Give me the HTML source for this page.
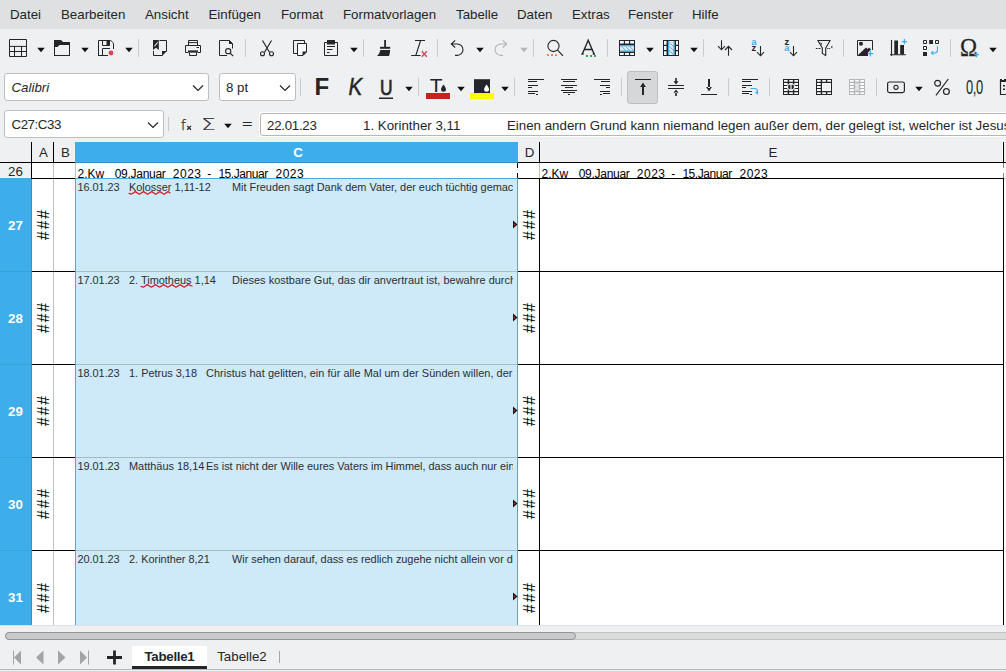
<!DOCTYPE html>
<html lang="de"><head><meta charset="utf-8"><title>Tabellenkalkulation</title>
<style>
html,body{margin:0;padding:0;}
body{width:1006px;height:671px;overflow:hidden;background:#eff0f1;position:relative;
 font-family:"Liberation Sans","DejaVu Sans",sans-serif;font-size:13.33px;color:#232629;}
.abs{position:absolute;}
.menubar{left:0;top:0;width:1006px;height:29px;background:#dee0e2;}
.menu{top:0;height:29px;line-height:29px;white-space:pre;font-size:13.3px;color:#232629;}
.ico{position:absolute;width:24px;height:24px;overflow:visible;}
.sep{position:absolute;width:1px;background:#c9cbcd;}
.dd{position:absolute;width:0;height:0;border-left:3.5px solid transparent;border-right:3.5px solid transparent;border-top:4px solid #232629;}
.dd.dis{border-top-color:#b4b6b8;}
.box{position:absolute;background:#fff;border:1px solid #bcbec0;border-radius:3px;box-sizing:border-box;}
.boxt{position:absolute;white-space:pre;color:#232629;}
.hdr{position:absolute;background:#eff0f1;color:#232629;text-align:center;font-size:13.3px;white-space:pre;}
.hsel{background:#3daee9;color:#fff;font-weight:bold;}
.cell{position:absolute;white-space:pre;overflow:hidden;color:#232629;}
.ct{position:absolute;white-space:pre;font-size:10.93px;color:#2b2f33;top:0;line-height:13px;}
.hash{position:absolute;white-space:pre;font-size:15.6px;letter-spacing:1.9px;text-indent:1.9px;color:#000;transform:rotate(-90deg);transform-origin:center center;line-height:16px;width:40px;height:16px;text-align:center;}
.ln{position:absolute;background:#000;}
.gl{position:absolute;background:#c0c0c0;}
</style></head>
<body>
<div class="abs menubar"></div>
<div class="abs menu" style="left:10px">Datei</div>
<div class="abs menu" style="left:61px">Bearbeiten</div>
<div class="abs menu" style="left:145px">Ansicht</div>
<div class="abs menu" style="left:208.5px">Einfügen</div>
<div class="abs menu" style="left:281px">Format</div>
<div class="abs menu" style="left:343px">Formatvorlagen</div>
<div class="abs menu" style="left:456px">Tabelle</div>
<div class="abs menu" style="left:517px">Daten</div>
<div class="abs menu" style="left:572px">Extras</div>
<div class="abs menu" style="left:628px">Fenster</div>
<div class="abs menu" style="left:692px">Hilfe</div>
<svg class="ico" style="left:6px;top:36px" viewBox="0 0 24 24"><path d="M3.5 3.5H20.5V20.5H3.5Z M3.5 10.4H20.5 M3.5 15.5H20.5 M8.5 10V20.5 M15.5 10V20.5" fill="none" stroke="#232629" stroke-width="1" /></svg>
<svg class="ico" style="left:50px;top:36px" viewBox="0 0 24 24"><path d="M4 4H11L13 6H20V20H4Z M5 11V19H19V9H9.5L7.5 11Z" fill="#232629" fill-rule="evenodd"/></svg>
<svg class="ico" style="left:94px;top:36px" viewBox="0 0 24 24"><path d="M4.5 20V4.5H16.8L19.5 7.2V13 M4 19.5H14 M8.5 4.5V9.5H15.5V4.5 M8.5 19.5V12.5H16" fill="none" stroke="#232629" stroke-width="1" /><path d="M12.5 5H15V9H12.5Z" fill="#232629" /><circle cx="17" cy="17" r="2.4" fill="#da4453"/></svg>
<svg class="ico" style="left:148px;top:36px" viewBox="0 0 24 24"><path d="M5 4H10.8V14L7.9 11.8L5 14Z" fill="#232629" /><path d="M6 10L9.8 5.6V7L7 10.6Z" fill="#eff0f1" /><path d="M11.5 4.5H18.5V15.5 M5.5 15V19.5H14.5" fill="none" stroke="#232629" stroke-width="1" /><path d="M14 15H19L14 20Z" fill="#232629" /></svg>
<svg class="ico" style="left:181px;top:36px" viewBox="0 0 24 24"><path d="M7.5 9V4.5H16.5V9 M7 16.5H4.5V9.5H19.5V16.5H17 M8.5 16.5V19.5H15.5V16.5 M8 6.6H16" fill="none" stroke="#232629" stroke-width="1" /><path d="M7 14.4H17V16.6H7Z" fill="#232629" /><path d="M15.5 11H18V12H15.5Z" fill="#232629" /></svg>
<svg class="ico" style="left:214px;top:36px" viewBox="0 0 24 24"><path d="M13 19.5H5.5V4.5H15.5L18.5 7.5V12.5" fill="none" stroke="#232629" stroke-width="1" /><path d="M15 4V8H19Z" fill="#232629" /><circle cx="14.2" cy="15.2" r="2.6" fill="none" stroke="#232629" stroke-width="1.1"/><path d="M16 17L19.2 20.2" fill="none" stroke="#232629" stroke-width="1.2" /></svg>
<svg class="ico" style="left:255px;top:36px" viewBox="0 0 24 24"><path d="M7.5 4.5L14.5 16.2 M16.5 4.5L9.5 16.2" fill="none" stroke="#232629" stroke-width="1.2" /><circle cx="7.5" cy="17.7" r="2" fill="none" stroke="#232629" stroke-width="1.1"/><circle cx="16.5" cy="17.7" r="2" fill="none" stroke="#232629" stroke-width="1.1"/></svg>
<svg class="ico" style="left:288px;top:36px" viewBox="0 0 24 24"><path d="M9 17.5H5.5V4.5H16.5V7" fill="none" stroke="#232629" stroke-width="1" /><path d="M9.5 7.5H18.5V16L15 19.5H9.5Z" fill="#fcfcfc" stroke="#232629" stroke-width="1"/><path d="M14.5 15.5H19L14.5 20Z" fill="#232629" /></svg>
<svg class="ico" style="left:319px;top:36px" viewBox="0 0 24 24"><path d="M5.5 6.5H18.5V19.5H5.5Z" fill="none" stroke="#232629" stroke-width="1" /><path d="M8 4H16V8.5H8Z" fill="#232629" /><path d="M8 10.5H16 M8 13.5H13.5 M8 16.5H10.5" fill="none" stroke="#232629" stroke-width="1" /></svg>
<svg class="ico" style="left:372px;top:36px" viewBox="0 0 24 24"><path d="M12.2 4H14V11H12.2Z" fill="#232629" /><path d="M8 10.8H18.2V12.8H8Z" fill="#232629" /><path d="M8.3 14H18.2C18 16.5 17.6 18.5 17 20H5C6.8 18.5 7.8 16.5 8.3 14Z" fill="#232629" /></svg>
<svg class="ico" style="left:407px;top:36px" viewBox="0 0 24 24"><path d="M8 4.5H18 M4.2 19.5H13.5 M13.6 4.5L8.8 19.5" fill="none" stroke="#232629" stroke-width="1.1" /><path d="M14.8 15.3L19.8 20.7 M19.8 15.3L14.8 20.7" fill="none" stroke="#da4453" stroke-width="1.35" /></svg>
<svg class="ico" style="left:445px;top:36px" viewBox="0 0 24 24"><path d="M10.2 4.3L6.3 8L10.2 11.5 M6.5 8H12.3A5.7 5.7 0 0 1 12.3 19.4H10" fill="none" stroke="#232629" stroke-width="1.1" /></svg>
<svg class="ico" style="left:489px;top:36px" viewBox="0 0 24 24"><path d="M13.8 4.3L17.7 8L13.8 11.5 M17.5 8H11.7A5.7 5.7 0 0 0 11.7 19.4H14" fill="none" stroke="#b3b5b6" stroke-width="1.1" /></svg>
<svg class="ico" style="left:542px;top:36px" viewBox="0 0 24 24"><circle cx="11.5" cy="10" r="5.6" fill="none" stroke="#232629" stroke-width="1.1"/><path d="M15.6 14.2L21 19.8" fill="none" stroke="#232629" stroke-width="1.2" /><path d="M5 18.2H7V20H5Z M9 18.2H11V20H9Z M13 18.2H15V20H13Z" fill="#f47750" /></svg>
<svg class="ico" style="left:576px;top:36px" viewBox="0 0 24 24"><path d="M6.3 18L12.2 4.2L18.1 18 M8.3 13.5H16.1 M5.4 18H7.6 M16.8 18H19" fill="none" stroke="#232629" stroke-width="1.4" /><path d="M10 19H12V21H10Z M14 19H16V21H14Z M18 19H20V21H18Z" fill="#27ae60" /></svg>
<svg class="ico" style="left:615px;top:36px" viewBox="0 0 24 24"><path d="M4 4H20V20H4Z" fill="#232629" /><path d="M5 5H8.8V7.5H5Z M10 5H14V7.5H10Z M15.2 5H19V7.5H15.2Z M5 17H8.8V19H5Z M10 17H14V19H10Z M15.2 17H19V19H15.2Z" fill="#fcfcfc" /><path d="M5 9H19V15.5H5Z" fill="#e6e8ea" /><path d="M5 9.6H19 M5 15H19" fill="none" stroke="#3daee9" stroke-width="1.1" /><path d="M6 9.6L11 15 M10 9.6L15 15 M14 9.6L19 15" fill="none" stroke="#3daee9" stroke-width="0.9" /></svg>
<svg class="ico" style="left:659px;top:36px" viewBox="0 0 24 24"><g transform="rotate(90 12 12) scale(1,-1) translate(0,-24)"><path d="M4 4H20V20H4Z" fill="#232629" /><path d="M5 5H8.8V7.5H5Z M10 5H14V7.5H10Z M15.2 5H19V7.5H15.2Z M5 17H8.8V19H5Z M10 17H14V19H10Z M15.2 17H19V19H15.2Z" fill="#fcfcfc" /><path d="M5 9H19V15.5H5Z" fill="#e6e8ea" /><path d="M5 9.6H19 M5 15H19" fill="none" stroke="#3daee9" stroke-width="1.1" /><path d="M6 9.6L11 15 M10 9.6L15 15 M14 9.6L19 15" fill="none" stroke="#3daee9" stroke-width="0.9" /></g></svg>
<svg class="ico" style="left:713px;top:36px" viewBox="0 0 24 24"><path d="M8.5 4.2V13.6 M5 10.2L8.5 13.8L12 10.2 M15.5 19.8V10.6 M12 14L15.5 10.4L19 14" fill="none" stroke="#232629" stroke-width="1.1" /></svg>
<svg class="ico" style="left:745px;top:36px" viewBox="0 0 24 24"><text x="6.2" y="8.8" font-family="Liberation Sans, sans-serif" font-size="9.4" fill="#3daee9" font-weight="bold">a</text><text x="6.4" y="14.9" font-family="Liberation Sans, sans-serif" font-size="9.4" fill="#232629" font-weight="bold">z</text><path d="M15.5 10V19.6 M12 16.2L15.5 19.8L19 16.2" fill="none" stroke="#232629" stroke-width="1.1" /></svg>
<svg class="ico" style="left:778px;top:36px" viewBox="0 0 24 24"><text x="6.4" y="8.8" font-family="Liberation Sans, sans-serif" font-size="9.4" fill="#232629" font-weight="bold">z</text><text x="6.2" y="14.9" font-family="Liberation Sans, sans-serif" font-size="9.4" fill="#3daee9" font-weight="bold">a</text><path d="M15.5 10V19.6 M12 16.2L15.5 19.8L19 16.2" fill="none" stroke="#232629" stroke-width="1.1" /></svg>
<svg class="ico" style="left:812px;top:36px" viewBox="0 0 24 24"><path d="M5.8 4.5H18.2L13.7 12V19.6L10.3 17.4V12Z" fill="none" stroke="#232629" stroke-width="1.1" stroke-linejoin="round"/><path d="M3.8 12.5H5.6 M6.5 12.5H8.5 M15.2 12.5H16.5 M17.2 12.5H18.2" fill="none" stroke="#232629" stroke-width="1" /><path d="M20.3 9.4V12.6L18.9 11Z" fill="#232629" /><path d="M7.8 7L9.6 7.4L9.2 9" fill="none" stroke="#232629" stroke-width="0.8" /></svg>
<svg class="ico" style="left:853px;top:36px" viewBox="0 0 24 24"><path d="M15 19.5H4.5V4.5H19.5V14" fill="none" stroke="#232629" stroke-width="1" /><circle cx="8" cy="7.8" r="2" fill="#232629"/><path d="M5 19L13 11.5L14.5 13L16 11.5L18 13.5L15 16.5V19Z" fill="#232629" /><path d="M14.6 17.6H20.2 M17.4 14.8V20.4" fill="none" stroke="#3daee9" stroke-width="1.3" /></svg>
<svg class="ico" style="left:886px;top:36px" viewBox="0 0 24 24"><path d="M5.5 4V19.5 M4 18.8H19.8" fill="none" stroke="#232629" stroke-width="1.1" /><path d="M8.3 4.5H12V18.5H8.3Z M14.2 9H18V18.5H14.2Z" fill="#232629" /><path d="M4.7 18.8L5.5 20.3L6.3 18.8Z" fill="#232629" /><path d="M15.8 5.6H21 M18.4 3V8.2" fill="none" stroke="#3daee9" stroke-width="1.2" /></svg>
<svg class="ico" style="left:919px;top:36px" viewBox="0 0 24 24"><path d="M4.5 4.5H7.5V7.5H4.5Z M16.5 4.5H19.5V7.5H16.5Z M4.5 10.5H7.5V13.5H4.5Z" fill="none" stroke="#232629" stroke-width="1" /><path d="M10.2 4H14V8H10.2Z M4 16H8V20H4Z" fill="#232629" /><path d="M18.5 10.3V14A3 3 0 0 1 15.5 17H12.6 M14.3 15.2L12.5 17L14.3 18.8" fill="none" stroke="#3daee9" stroke-width="1.1" /></svg>
<svg class="ico" style="left:957px;top:36px" viewBox="0 0 24 24"><text x="3.3" y="19.85" font-family="Liberation Serif, serif" font-size="25.6" fill="#232629" stroke="#232629" stroke-width="0.3" transform="scale(0.9,1)">Ω</text><path d="M16.9 18.7H22.1 M19.5 16.1V21.3" fill="none" stroke="#3daee9" stroke-width="1.3" /></svg>
<svg class="abs" style="left:35.5px;top:47px;width:10px;height:6px" viewBox="0 0 10 6"><path d="M1.2 0.8H8.8L5 5.2Z" fill="#111"/></svg>
<svg class="abs" style="left:79.5px;top:47px;width:10px;height:6px" viewBox="0 0 10 6"><path d="M1.2 0.8H8.8L5 5.2Z" fill="#111"/></svg>
<svg class="abs" style="left:123.5px;top:47px;width:10px;height:6px" viewBox="0 0 10 6"><path d="M1.2 0.8H8.8L5 5.2Z" fill="#111"/></svg>
<svg class="abs" style="left:348.5px;top:47px;width:10px;height:6px" viewBox="0 0 10 6"><path d="M1.2 0.8H8.8L5 5.2Z" fill="#111"/></svg>
<svg class="abs" style="left:474.5px;top:47px;width:10px;height:6px" viewBox="0 0 10 6"><path d="M1.2 0.8H8.8L5 5.2Z" fill="#111"/></svg>
<svg class="abs" style="left:644.5px;top:47px;width:10px;height:6px" viewBox="0 0 10 6"><path d="M1.2 0.8H8.8L5 5.2Z" fill="#111"/></svg>
<svg class="abs" style="left:688.5px;top:47px;width:10px;height:6px" viewBox="0 0 10 6"><path d="M1.2 0.8H8.8L5 5.2Z" fill="#111"/></svg>
<svg class="abs" style="left:987.5px;top:47px;width:10px;height:6px" viewBox="0 0 10 6"><path d="M1.2 0.8H8.8L5 5.2Z" fill="#111"/></svg>
<svg class="abs" style="left:518.5px;top:47px;width:10px;height:6px" viewBox="0 0 10 6"><path d="M1.2 0.8H8.8L5 5.2Z" fill="#b4b6b8"/></svg>
<div class="sep" style="left:138px;top:39px;height:18px"></div>
<div class="sep" style="left:245px;top:39px;height:18px"></div>
<div class="sep" style="left:363px;top:39px;height:18px"></div>
<div class="sep" style="left:437px;top:39px;height:18px"></div>
<div class="sep" style="left:533px;top:39px;height:18px"></div>
<div class="sep" style="left:607px;top:39px;height:18px"></div>
<div class="sep" style="left:703px;top:39px;height:18px"></div>
<div class="sep" style="left:843px;top:39px;height:18px"></div>
<div class="sep" style="left:950px;top:39px;height:18px"></div>
<div class="box" style="left:4px;top:73px;width:205px;height:28px"></div>
<div class="boxt" style="left:11.5px;top:73px;line-height:29px;font-style:italic;font-size:13.3px">Calibri</div>
<div class="box" style="left:219px;top:73px;width:77px;height:28px"></div>
<div class="boxt" style="left:226px;top:73px;line-height:29px;font-size:13.3px">8 pt</div>
<svg class="ico" style="left:186px;top:75.7px" viewBox="0 0 24 24"><path d="M7 9.5L12 14.5L17 9.5" fill="none" stroke="#232629" stroke-width="1.2" /></svg>
<svg class="ico" style="left:273px;top:75.7px" viewBox="0 0 24 24"><path d="M7 9.5L12 14.5L17 9.5" fill="none" stroke="#232629" stroke-width="1.2" /></svg>
<div class="abs" style="left:627px;top:71px;width:31px;height:33px;background:#d6d7d8;border:1px solid #bcbec0;border-radius:3px;box-sizing:border-box"></div>
<svg class="ico" style="left:309px;top:75px" viewBox="0 0 24 24"><text x="5.5" y="20.1" font-family="Liberation Sans, sans-serif" font-size="24" fill="#232629" font-weight="bold">F</text></svg>
<svg class="ico" style="left:342px;top:75px" viewBox="0 0 24 24"><text x="7.7" y="20.1" font-family="Liberation Sans, sans-serif" font-size="24" font-style="italic" fill="#232629" stroke="#232629" stroke-width="0.45" transform="scale(0.86,1)">K</text></svg>
<svg class="ico" style="left:374px;top:75px" viewBox="0 0 24 24"><text x="7.6" y="19.9" font-family="Liberation Sans, sans-serif" font-size="22.3" fill="#232629" stroke="#232629" stroke-width="0.7" transform="scale(0.78,1)">U</text><path d="M5 22.5H19V24H5Z" fill="#232629" /></svg>
<svg class="ico" style="left:426px;top:75px" viewBox="0 0 24 24"><text x="3.2" y="17" font-family="Liberation Sans, sans-serif" font-size="17.9" fill="#232629" transform="scale(1.17,1)">T</text><path d="M17.5 9.4C18.6 11.2 20 12.6 20 14.2A2.5 2.5 0 0 1 15 14.2C15 12.6 16.4 11.2 17.5 9.4Z" fill="#232629" /><path d="M0 18H24V24H0Z" fill="#c9211e" /></svg>
<svg class="ico" style="left:470px;top:75px" viewBox="0 0 24 24"><path d="M4 4.2H20V18H4Z" fill="#232629" /><path d="M16.6 9.4C17.7 11.2 19.1 12.6 19.1 14.2A2.5 2.5 0 0 1 14.1 14.2C14.1 12.6 15.5 11.2 16.6 9.4Z" fill="#fcfcfc" /><path d="M0 18H24V24H0Z" fill="#ffff00" /></svg>
<svg class="ico" style="left:524px;top:75px" viewBox="0 0 24 24"><path d="M4 4H20V5H4Z M4 6H13V7H4Z M4 10H14V11H4Z M4 12H8V13H4Z M4 16H14V17H4Z M4 18H11V19H4Z M12 19H14V20H12Z" fill="#232629" /></svg>
<svg class="ico" style="left:557px;top:75px" viewBox="0 0 24 24"><path d="M4 4H20V5H4Z M6 6H18V7H6Z M4 10H20V11H4Z M8 12H16V13H8Z M4 15H20V16H4Z M6 17H18V18H6Z M11 19H13V20H11Z" fill="#232629" /></svg>
<svg class="ico" style="left:590px;top:75px" viewBox="0 0 24 24"><path d="M4 4H20V5H4Z M11 6H20V7H11Z M10 10H20V11H10Z M16 12H20V13H16Z M10 16H20V17H10Z M13 18H20V19H13Z M10 19H12V20H10Z" fill="#232629" /></svg>
<svg class="ico" style="left:631px;top:75px" viewBox="0 0 24 24"><path d="M4 4H20V5H4Z M11 11.5H13V20H11Z M12 7.4L14.9 12H9.1Z" fill="#232629" /></svg>
<svg class="ico" style="left:664px;top:75px" viewBox="0 0 24 24"><path d="M4 10H20V11H4Z M4 13H20V14H4Z M11.2 3H12.8V7H11.2Z M12 9.5L9.5 6.2H14.5Z M11.2 17H12.8V21H11.2Z M12 14.5L9.5 17.8H14.5Z" fill="#232629" /></svg>
<svg class="ico" style="left:697px;top:75px" viewBox="0 0 24 24"><path d="M4 19H20V20H4Z M11 4H13V13H11Z M12 16.6L14.9 12H9.1Z" fill="#232629" /></svg>
<svg class="ico" style="left:738px;top:75px" viewBox="0 0 24 24"><path d="M4 4H20V5H4Z M4 6H13V7H4Z M4 10H14V11H4Z M4 12H8V13H4Z M4 16H14V17H4Z M4 18H11V19H4Z M12 19H14V20H12Z" fill="#232629" /><path d="M12.3 13.5H16.5A3 3 0 0 1 19.5 16.5V18.5" fill="none" stroke="#3daee9" stroke-width="1.2" /><path d="M16.8 17L19.8 20L19.8 16.4Z" fill="#3daee9" /></svg>
<svg class="ico" style="left:779px;top:75px" viewBox="0 0 24 24"><path d="M4 4H20V20H4Z" fill="#232629" /><path d="M5 5H8.7V6.8H5Z M10.2 5H13.9V6.8H10.2Z M15.3 5H19V6.8H15.3Z M5 17.2H8.7V19H5Z M10.2 17.2H13.9V19H10.2Z M15.3 17.2H19V19H15.3Z" fill="#fcfcfc" /><path d="M5 8.1H8.7V9.9H5Z M5 11.1H8.7V12.9H5Z M5 14.1H8.7V15.9H5Z M15.3 8.1H19V9.9H15.3Z M15.3 11.1H19V12.9H15.3Z M15.3 14.1H19V15.9H15.3Z M10.2 8.1H13.9V9.2H10.2Z M10.2 14.8H13.9V15.9H10.2Z" fill="#fcfcfc" /><ellipse cx="12" cy="12" rx="4" ry="3.2" fill="#fcfcfc"/><path d="M11.4 9.6V14.4A2.4 2.4 0 0 1 11.4 9.6Z M12.6 9.6V14.4A2.4 2.4 0 0 0 12.6 9.6Z" fill="#232629" /></svg>
<svg class="ico" style="left:812px;top:75px" viewBox="0 0 24 24"><path d="M4 4H20V20H4Z" fill="#232629" /><path d="M5 5H8.7V6.8H5Z M10.2 5H13.9V6.8H10.2Z M15.3 5H19V6.8H15.3Z M5 17.2H8.7V19H5Z M10.2 17.2H13.9V19H10.2Z M15.3 17.2H19V19H15.3Z" fill="#fcfcfc" /><path d="M5 8.1H8.7V9.9H5Z M5 11.1H8.7V12.9H5Z M5 14.1H8.7V15.9H5Z" fill="#fcfcfc" /><path d="M10 8H19V16H10Z" fill="#fcfcfc" /><path d="M11 9H18V15H11Z" fill="#eff0f1" /></svg>
<svg class="ico" style="left:845px;top:75px" viewBox="0 0 24 24"><path d="M4 4H20V20H4Z" fill="#b5b6b7" /><path d="M5 5H8.7V6.8H5Z M10.2 5H13.9V6.8H10.2Z M15.3 5H19V6.8H15.3Z M5 17.2H8.7V19H5Z M10.2 17.2H13.9V19H10.2Z M15.3 17.2H19V19H15.3Z" fill="#fcfcfc" /><path d="M5 8.1H8.7V9.9H5Z M5 11.1H8.7V12.9H5Z M5 14.1H8.7V15.9H5Z M15.3 8.1H19V9.9H15.3Z M15.3 11.1H19V12.9H15.3Z M15.3 14.1H19V15.9H15.3Z" fill="#fcfcfc" /><path d="M9.2 8.2H14.8L13.4 12L14.8 15.8H9.2L10.6 12Z" fill="#e2e3e4" /></svg>
<svg class="ico" style="left:885px;top:75px" viewBox="0 0 24 24"><rect x="2.6" y="7" width="16.8" height="10.6" rx="1.8" fill="none" stroke="#232629" stroke-width="1.2"/><circle cx="11" cy="12.3" r="2.1" fill="none" stroke="#232629" stroke-width="1.1"/></svg>
<svg class="ico" style="left:930px;top:75px" viewBox="0 0 24 24"><circle cx="7.6" cy="8.2" r="2.9" fill="none" stroke="#232629" stroke-width="1.2"/><circle cx="16.4" cy="16.6" r="2.9" fill="none" stroke="#232629" stroke-width="1.2"/><path d="M18.3 4L6 20.3" fill="none" stroke="#232629" stroke-width="1.2" /></svg>
<svg class="ico" style="left:963px;top:75px" viewBox="0 0 24 24"><text x="4.4" y="19.3" font-family="Liberation Sans, sans-serif" font-size="19.5" fill="#232629" transform="scale(0.66,1)" letter-spacing="-0.5">0,0</text></svg>
<svg class="ico" style="left:996px;top:75px" viewBox="0 0 24 24"><path d="M4.5 5V19.5H20" fill="none" stroke="#232629" stroke-width="1.2" /><path d="M4 4H20V7H4Z" fill="#232629" /><path d="M7 10H9V11.5H7Z M7 13.5H9V15H7Z" fill="#232629" /><path d="M6 3H8V5H6Z" fill="#eff0f1" /></svg>
<svg class="abs" style="left:403.5px;top:86px;width:10px;height:6px" viewBox="0 0 10 6"><path d="M1.2 0.8H8.8L5 5.2Z" fill="#111"/></svg>
<svg class="abs" style="left:455.5px;top:86px;width:10px;height:6px" viewBox="0 0 10 6"><path d="M1.2 0.8H8.8L5 5.2Z" fill="#111"/></svg>
<svg class="abs" style="left:499.5px;top:86px;width:10px;height:6px" viewBox="0 0 10 6"><path d="M1.2 0.8H8.8L5 5.2Z" fill="#111"/></svg>
<svg class="abs" style="left:913.5px;top:86px;width:10px;height:6px" viewBox="0 0 10 6"><path d="M1.2 0.8H8.8L5 5.2Z" fill="#111"/></svg>
<div class="sep" style="left:300px;top:78px;height:18px"></div>
<div class="sep" style="left:418px;top:78px;height:18px"></div>
<div class="sep" style="left:514px;top:78px;height:18px"></div>
<div class="sep" style="left:621px;top:78px;height:18px"></div>
<div class="sep" style="left:728px;top:78px;height:18px"></div>
<div class="sep" style="left:769px;top:78px;height:18px"></div>
<div class="sep" style="left:876px;top:78px;height:18px"></div>
<div class="box" style="left:4px;top:110px;width:160px;height:28px"></div>
<div class="boxt" style="left:11.5px;top:110px;line-height:29px;font-size:13.3px;letter-spacing:-0.45px">C27:C33</div>
<svg class="ico" style="left:141px;top:112.5px" viewBox="0 0 24 24"><path d="M7 9.5L12 14.5L17 9.5" fill="none" stroke="#232629" stroke-width="1.2" /></svg>
<div class="sep" style="left:168px;top:117px;height:14px"></div>
<svg class="ico" style="left:173px;top:113px" viewBox="0 0 24 24"><text x="7.8" y="16.5" font-family="DejaVu Sans Light, Liberation Sans, sans-serif" font-size="14.8" fill="#232629" stroke="#232629" stroke-width="0.25">f</text><path d="M14.2 12.9L18 16.7 M18 12.9L14.2 16.7" fill="none" stroke="#232629" stroke-width="1.3" /></svg>
<svg class="ico" style="left:198px;top:113px" viewBox="0 0 24 24"><text x="2.3" y="17" font-family="DejaVu Sans Light, Liberation Sans, sans-serif" font-size="16.5" fill="#232629" stroke="#232629" stroke-width="0.2" transform="scale(1.38,1)">Σ</text></svg>
<svg class="abs" style="left:222.5px;top:123px;width:10px;height:6px" viewBox="0 0 10 6"><path d="M1.2 0.8H8.8L5 5.2Z" fill="#111"/></svg>
<svg class="ico" style="left:234px;top:113px" viewBox="0 0 24 24"><text x="5.35" y="15" font-family="Liberation Sans, sans-serif" font-size="11" fill="#232629" stroke="#232629" stroke-width="0.3" transform="scale(1.55,1)">=</text></svg>
<div class="abs" style="left:259px;top:112px;width:760px;height:25px;background:#fff"></div>
<div class="box" style="left:260px;top:113px;width:760px;height:23px;border-radius:3px;border-color:#b4b6b8"></div>
<div class="boxt" style="left:267px;top:113px;line-height:26px;font-size:13.3px;letter-spacing:-0.27px">22.01.23</div>
<div class="boxt" style="left:363px;top:113px;line-height:26px;font-size:13.3px;letter-spacing:0px">1. Korinther 3,11</div>
<div class="boxt" style="left:507px;top:113px;line-height:26px;font-size:13.3px;letter-spacing:0px">Einen andern Grund kann niemand legen außer dem, der gelegt ist, welcher ist Jesus Christus.</div>
<div class="abs" style="left:0;top:142px;width:1006px;height:484px;background:#fff"></div>
<div class="hdr" style="left:0px;top:142px;width:31px;height:20px;line-height:21px"><span style="position:relative;left:0px"></span></div>
<div class="hdr" style="left:32px;top:142px;width:21px;height:20px;line-height:21px"><span style="position:relative;left:1px">A</span></div>
<div class="hdr" style="left:54px;top:142px;width:21px;height:20px;line-height:21px"><span style="position:relative;left:1px">B</span></div>
<div class="hdr hsel" style="left:75px;top:142px;width:443px;height:20px;line-height:21px"><span style="position:relative;left:1.5px">C</span></div>
<div class="hdr" style="left:518px;top:142px;width:21px;height:20px;line-height:21px"><span style="position:relative;left:1px">D</span></div>
<div class="hdr" style="left:540px;top:142px;width:462px;height:20px;line-height:21px"><span style="position:relative;left:2px">E</span></div>
<div class="hdr" style="left:1003px;top:142px;width:3px;height:20px;line-height:21px"><span style="position:relative;left:0px"></span></div>
<div class="hdr" style="left:0;top:163px;width:31px;height:15px"><span class="abs" style="left:0;width:31px;top:-1.5px;line-height:20px">26</span></div>
<div class="hdr hsel" style="left:0;top:178px;width:32px;height:93px"><span class="abs" style="left:0;width:31px;top:38.0px;line-height:20px">27</span></div>
<div class="hdr hsel" style="left:0;top:272px;width:32px;height:92px"><span class="abs" style="left:0;width:31px;top:37.0px;line-height:20px">28</span></div>
<div class="hdr hsel" style="left:0;top:365px;width:32px;height:92px"><span class="abs" style="left:0;width:31px;top:37.0px;line-height:20px">29</span></div>
<div class="hdr hsel" style="left:0;top:458px;width:32px;height:92px"><span class="abs" style="left:0;width:31px;top:37.0px;line-height:20px">30</span></div>
<div class="hdr hsel" style="left:0;top:551px;width:32px;height:75px"><span class="abs" style="left:0;width:31px;top:36.5px;line-height:20px">31</span></div>
<div class="abs" style="left:75px;top:179px;width:443px;height:447px;background:#cee9f7"></div>
<div class="abs" style="left:75px;top:162px;width:443px;height:1px;background:#3293cc"></div>
<div class="abs" style="left:0px;top:162px;width:75px;height:1px;background:#000"></div>
<div class="abs" style="left:518px;top:162px;width:488px;height:1px;background:#000"></div>
<div class="abs" style="left:31px;top:142px;width:1px;height:37px;background:#000"></div>
<div class="abs" style="left:53px;top:142px;width:1px;height:21px;background:#000"></div>
<div class="abs" style="left:539px;top:142px;width:1px;height:21px;background:#000"></div>
<div class="abs" style="left:1003px;top:142px;width:1px;height:21px;background:#000"></div>
<div class="abs" style="left:0px;top:271px;width:32px;height:1px;background:#3a9fd4"></div>
<div class="abs" style="left:0px;top:364px;width:32px;height:1px;background:#3a9fd4"></div>
<div class="abs" style="left:0px;top:457px;width:32px;height:1px;background:#3a9fd4"></div>
<div class="abs" style="left:0px;top:550px;width:32px;height:1px;background:#3a9fd4"></div>
<div class="abs" style="left:31px;top:179px;width:1px;height:446px;background:#3193cd"></div>
<div class="abs" style="left:53px;top:163px;width:1px;height:462px;background:#c0c0c0"></div>
<div class="abs" style="left:75px;top:163px;width:1px;height:16px;background:#c0c0c0"></div>
<div class="abs" style="left:539px;top:163px;width:1px;height:15px;background:#c0c0c0"></div>
<div class="abs" style="left:31px;top:178px;width:45px;height:1px;background:#000"></div>
<div class="abs" style="left:518px;top:178px;width:486px;height:1px;background:#000"></div>
<div class="abs" style="left:1004px;top:178px;width:2px;height:1px;background:#c0c0c0"></div>
<div class="abs" style="left:517px;top:163px;width:1px;height:5px;background:#000"></div>
<div class="abs" style="left:517px;top:173px;width:1px;height:5px;background:#000"></div>
<div class="abs" style="left:1003px;top:163px;width:1px;height:5px;background:#888"></div>
<div class="abs" style="left:1003px;top:173px;width:1px;height:5px;background:#888"></div>
<div class="abs" style="left:32px;top:271px;width:43px;height:1px;background:#000"></div>
<div class="abs" style="left:518px;top:271px;width:486px;height:1px;background:#000"></div>
<div class="abs" style="left:76px;top:271px;width:441px;height:1px;background:#a6bbc8"></div>
<div class="abs" style="left:32px;top:364px;width:43px;height:1px;background:#000"></div>
<div class="abs" style="left:518px;top:364px;width:486px;height:1px;background:#000"></div>
<div class="abs" style="left:76px;top:364px;width:441px;height:1px;background:#a6bbc8"></div>
<div class="abs" style="left:32px;top:457px;width:43px;height:1px;background:#000"></div>
<div class="abs" style="left:518px;top:457px;width:486px;height:1px;background:#000"></div>
<div class="abs" style="left:76px;top:457px;width:441px;height:1px;background:#a6bbc8"></div>
<div class="abs" style="left:32px;top:550px;width:43px;height:1px;background:#000"></div>
<div class="abs" style="left:518px;top:550px;width:486px;height:1px;background:#000"></div>
<div class="abs" style="left:76px;top:550px;width:441px;height:1px;background:#a6bbc8"></div>
<div class="abs" style="left:539px;top:178px;width:1px;height:447px;background:#000"></div>
<div class="abs" style="left:1003px;top:178px;width:1px;height:447px;background:#000"></div>
<div class="abs" style="left:75px;top:178px;width:443px;height:1px;background:#3daee9"></div>
<div class="abs" style="left:75px;top:178px;width:1px;height:447px;background:#3daee9"></div>
<div class="abs" style="left:517px;top:178px;width:1px;height:447px;background:#3daee9"></div>
<div class="abs" style="left:77px;top:163px;width:300px;height:15px;overflow:hidden"><span class="abs" style="left:0.5px;top:4px;font-size:12px;line-height:14px;letter-spacing:0px;white-space:pre;color:#000">2.Kw</span><span class="abs" style="left:37.7px;top:4px;font-size:12px;line-height:14px;letter-spacing:-0.28px;white-space:pre;color:#000">09.Januar</span><span class="abs" style="left:95.8px;top:4px;font-size:12px;line-height:14px;letter-spacing:0.5px;white-space:pre;color:#000">2023</span><span class="abs" style="left:130.3px;top:4px;font-size:12px;line-height:14px;letter-spacing:0px;white-space:pre;color:#000">-</span><span class="abs" style="left:141.4px;top:4px;font-size:12px;line-height:14px;letter-spacing:-0.45px;white-space:pre;color:#000">15.Januar</span><span class="abs" style="left:198.5px;top:4px;font-size:12px;line-height:14px;letter-spacing:0.5px;white-space:pre;color:#000">2023</span></div>
<div class="abs" style="left:541px;top:163px;width:300px;height:15px;overflow:hidden"><span class="abs" style="left:0.5px;top:4px;font-size:12px;line-height:14px;letter-spacing:0px;white-space:pre;color:#000">2.Kw</span><span class="abs" style="left:37.7px;top:4px;font-size:12px;line-height:14px;letter-spacing:-0.28px;white-space:pre;color:#000">09.Januar</span><span class="abs" style="left:95.8px;top:4px;font-size:12px;line-height:14px;letter-spacing:0.5px;white-space:pre;color:#000">2023</span><span class="abs" style="left:130.3px;top:4px;font-size:12px;line-height:14px;letter-spacing:0px;white-space:pre;color:#000">-</span><span class="abs" style="left:141.4px;top:4px;font-size:12px;line-height:14px;letter-spacing:-0.45px;white-space:pre;color:#000">15.Januar</span><span class="abs" style="left:198.5px;top:4px;font-size:12px;line-height:14px;letter-spacing:0.5px;white-space:pre;color:#000">2023</span></div>
<div class="abs" style="left:76px;top:179px;width:437px;height:20px;overflow:hidden"><span class="ct" style="left:1.6px;top:2px;letter-spacing:-0.06px">16.01.23</span><span class="ct" style="left:53px;top:2px">Kolosser 1,11-12</span><span class="ct" style="left:156px;top:2px;letter-spacing:-0.0145px">Mit Freuden sagt Dank dem Vater, der euch tüchtig gemacht</span></div>
<div class="abs" style="left:76px;top:272px;width:437px;height:20px;overflow:hidden"><span class="ct" style="left:1.6px;top:2px;letter-spacing:-0.06px">17.01.23</span><span class="ct" style="left:53px;top:2px">2. Timotheus 1,14</span><span class="ct" style="left:156px;top:2px;letter-spacing:0.032px">Dieses kostbare Gut, das dir anvertraut ist, bewahre durch</span></div>
<div class="abs" style="left:76px;top:365px;width:437px;height:20px;overflow:hidden"><span class="ct" style="left:1.6px;top:2px;letter-spacing:-0.06px">18.01.23</span><span class="ct" style="left:53px;top:2px">1. Petrus 3,18</span><span class="ct" style="left:130px;top:2px;letter-spacing:0.046px">Christus hat gelitten, ein für alle Mal um der Sünden willen, der</span></div>
<div class="abs" style="left:76px;top:458px;width:437px;height:20px;overflow:hidden"><span class="ct" style="left:1.6px;top:2px;letter-spacing:-0.06px">19.01.23</span><span class="ct" style="left:53px;top:2px">Matthäus 18,14</span><span class="ct" style="left:130px;top:2px;letter-spacing:-0.013px">Es ist nicht der Wille eures Vaters im Himmel, dass auch nur eine</span></div>
<div class="abs" style="left:76px;top:551px;width:437px;height:20px;overflow:hidden"><span class="ct" style="left:1.6px;top:2px;letter-spacing:-0.06px">20.01.23</span><span class="ct" style="left:53px;top:2px">2. Korinther 8,21</span><span class="ct" style="left:156px;top:2px;letter-spacing:-0.036px">Wir sehen darauf, dass es redlich zugehe nicht allein vor dem</span></div>
<svg class="abs" style="left:129px;top:191px;width:41px;height:4px;overflow:visible" viewBox="0 0 41 4"><path d="M0 2.4 L2.2 3.2 L6.3 0.6 L10.4 3.2 L14.5 0.6 L18.6 3.2 L22.7 0.6 L26.8 3.2 L30.9 0.6 L35.0 3.2 L39.1 0.6 L41 2.0" fill="none" stroke="#d81e2c" stroke-width="1.25" stroke-linejoin="round" stroke-linecap="round"/></svg>
<svg class="abs" style="left:141px;top:284px;width:51px;height:4px;overflow:visible" viewBox="0 0 51 4"><path d="M0 2.4 L2.2 3.2 L6.3 0.6 L10.4 3.2 L14.5 0.6 L18.6 3.2 L22.7 0.6 L26.8 3.2 L30.9 0.6 L35.0 3.2 L39.1 0.6 L43.2 3.2 L47.3 0.6 L51 2.0" fill="none" stroke="#d81e2c" stroke-width="1.25" stroke-linejoin="round" stroke-linecap="round"/></svg>
<div class="hash" style="left:23.7px;top:217px">###</div>
<div class="hash" style="left:509.7px;top:217px">###</div>
<svg class="abs" style="left:512px;top:219.8px;width:6px;height:9px" viewBox="0 0 6 9"><path d="M1 0.5 L5.5 4.5 L1 8.5 Z" fill="#111"/><path d="M1.8 3 L4 4.5 L1.8 6 Z" fill="#c8202c"/></svg>
<div class="hash" style="left:23.7px;top:310px">###</div>
<div class="hash" style="left:509.7px;top:310px">###</div>
<svg class="abs" style="left:512px;top:312.8px;width:6px;height:9px" viewBox="0 0 6 9"><path d="M1 0.5 L5.5 4.5 L1 8.5 Z" fill="#111"/><path d="M1.8 3 L4 4.5 L1.8 6 Z" fill="#c8202c"/></svg>
<div class="hash" style="left:23.7px;top:403px">###</div>
<div class="hash" style="left:509.7px;top:403px">###</div>
<svg class="abs" style="left:512px;top:405.8px;width:6px;height:9px" viewBox="0 0 6 9"><path d="M1 0.5 L5.5 4.5 L1 8.5 Z" fill="#111"/><path d="M1.8 3 L4 4.5 L1.8 6 Z" fill="#c8202c"/></svg>
<div class="hash" style="left:23.7px;top:496px">###</div>
<div class="hash" style="left:509.7px;top:496px">###</div>
<svg class="abs" style="left:512px;top:498.8px;width:6px;height:9px" viewBox="0 0 6 9"><path d="M1 0.5 L5.5 4.5 L1 8.5 Z" fill="#111"/><path d="M1.8 3 L4 4.5 L1.8 6 Z" fill="#c8202c"/></svg>
<div class="hash" style="left:23.7px;top:589.5px">###</div>
<div class="hash" style="left:509.7px;top:589.5px">###</div>
<svg class="abs" style="left:512px;top:592.3px;width:6px;height:9px" viewBox="0 0 6 9"><path d="M1 0.5 L5.5 4.5 L1 8.5 Z" fill="#111"/><path d="M1.8 3 L4 4.5 L1.8 6 Z" fill="#c8202c"/></svg>
<div class="abs" style="left:0;top:625px;width:1006px;height:46px;background:#eff0f1"></div>
<div class="abs" style="left:0;top:625px;width:1006px;height:1px;background:#dfe0e1"></div>
<div class="abs" style="left:5px;top:632px;width:1020px;height:8px;border-radius:4px;background:#dbdcdc;border:1px solid #c3c4c6;box-sizing:border-box"></div>
<div class="abs" style="left:5px;top:632px;width:571px;height:8px;border-radius:4px;background:#c9cacb;border:1px solid #929496;box-sizing:border-box"></div>
<svg class="abs" style="left:0;top:645px;width:130px;height:24px" viewBox="0 0 130 24"><g fill="#a2a4a5"><rect x="13" y="5.5" width="1" height="14"/><path d="M21 5.5 L21 19.5 L14 12.5 Z"/><path d="M43.5 5.5 L43.5 19.5 L36 12.5 Z"/><path d="M58 5.5 L58 19.5 L65.5 12.5 Z"/><path d="M80 5.5 L80 19.5 L87 12.5 Z"/><rect x="88" y="5.5" width="1" height="14"/></g><path d="M107 12.5 H122 M114.5 5.5 V19.5" stroke="#232629" stroke-width="2.8" fill="none"/></svg>
<div class="abs" style="left:132px;top:646px;width:75px;height:20px;background:#fff"></div>
<div class="abs" style="left:132px;top:666px;width:75px;height:3px;background:#232629"></div>
<div class="abs" style="left:132px;top:646px;width:75px;height:20px;line-height:21px;text-align:center;font-weight:bold;font-size:13.3px;letter-spacing:-0.28px;white-space:pre">Tabelle1</div>
<div class="abs" style="left:207px;top:646px;width:70px;height:20px;line-height:21px;text-align:center;font-size:13.3px;white-space:pre">Tabelle2</div>
<div class="abs" style="left:279px;top:651px;width:1px;height:12px;background:#a2a4a5"></div>
<div class="abs" style="left:0px;top:669px;width:1006px;height:1px;background:#b6b8ba"></div>
</body></html>
